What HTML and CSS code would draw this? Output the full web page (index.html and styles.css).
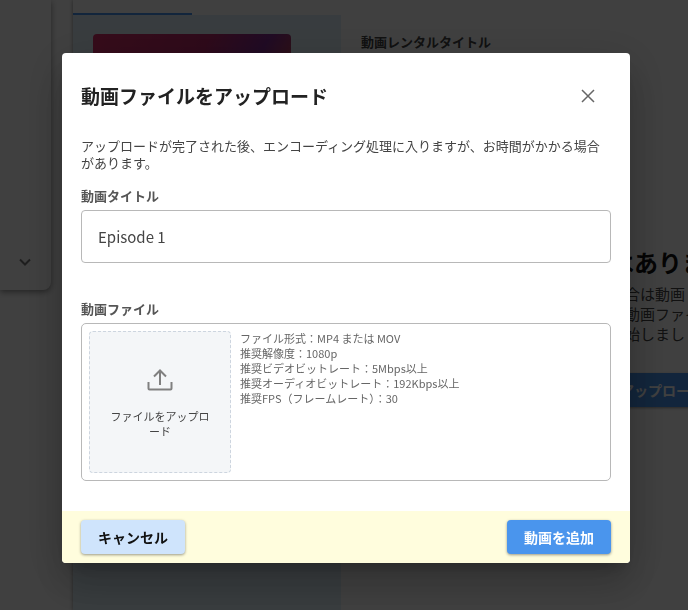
FILE: index.html
```html
<!DOCTYPE html>
<html lang="ja">
<head>
  <meta charset="UTF-8">
  <meta name="viewport" content="width=device-width, initial-scale=1.0">
  <title>動画ファイルをアップロード</title>
  <link rel="stylesheet" href="styles.css">
</head>
<body>
  <div class="page">
    <aside class="sidebar">
      <svg class="chevron" viewBox="0 0 12 8" aria-hidden="true"><path d="M1 1.5l5 5 5-5"/></svg>
    </aside>
    <main class="content">
      <div class="tabs"><div class="tab-active"></div></div>
      <div class="columns">
        <div class="preview"><div class="thumbnail"></div></div>
        <div class="details">
          <h3 class="details-label">動画レンタルタイトル</h3>
          <div class="empty">
            <h2>はありま</h2>
            <p>場合は動画<br>の動画ファイ<br>開始しまし</p>
            <button class="button empty-button" type="button">アップロード</button>
          </div>
        </div>
      </div>
    </main>
  </div>

  <div class="overlay">
    <div class="dialog" role="dialog" aria-modal="true" aria-labelledby="dialog-title">
      <header class="dialog-header">
        <h1 id="dialog-title">動画ファイルをアップロード</h1>
        <button class="close" type="button" aria-label="閉じる">
          <svg viewBox="0 0 14 14" aria-hidden="true"><path d="M1 1l12 12M13 1L1 13"/></svg>
        </button>
      </header>
      <div class="dialog-body">
        <p class="description">アップロードが完了された後、エンコーディング処理に入りますが、お時間がかかる場合があります。</p>
        <label class="field-label" for="video-title">動画タイトル</label>
        <input class="text-input" id="video-title" type="text" value="Episode 1">
        <label class="field-label" for="video-file">動画ファイル</label>
        <div class="file-box">
          <button class="dropzone" id="video-file" type="button">
            <svg viewBox="0 0 26 22" aria-hidden="true">
              <path d="M1.500 13v6.500a1 1 0 0 0 1 1h21a1 1 0 0 0 1-1V13"/>
              <path d="M13 16V1.500M7 7.500l6-6 6 6"/>
            </svg>
            <span>ファイルをアップロード</span>
          </button>
          <ul class="specs">
            <li>ファイル形式：MP4 または MOV</li>
            <li>推奨解像度：1080p</li>
            <li>推奨ビデオビットレート：5Mbps以上</li>
            <li>推奨オーディオビットレート：192Kbps以上</li>
            <li>推奨FPS（フレームレート）：30</li>
          </ul>
        </div>
      </div>
      <footer class="dialog-footer">
        <button class="button cancel" type="button">キャンセル</button>
        <button class="button submit" type="button">動画を追加</button>
      </footer>
    </div>
  </div>
</body>
</html>
```
FILE: styles.css
```css
* {
  box-sizing: border-box;
}
body {
  margin: 0;
  font-family: "Noto Sans CJK JP", sans-serif;
  color: #444;
  background: #fff;
  overflow: hidden;
}
h1, h2, h3, p, ul {
  margin: 0;
  padding: 0;
}
button, input {
  font-family: inherit;
}
svg {
  fill: none;
  stroke: currentColor;
}

/* Page behind the dialog */
.page {
  display: flex;
  align-items: flex-start;
  gap: 22px;
  height: 100vh;
  overflow: hidden;
}
.sidebar {
  flex: 0 0 51px;
  height: 290px;
  display: flex;
  align-items: flex-end;
  justify-content: flex-end;
  padding: 0 20px 24px 0;
  border-radius: 0 0 8px 0;
  box-shadow: 0 2px 6px rgba(0, 0, 0, 0.45);
}
.chevron {
  width: 12px;
  height: 8px;
  color: #777;
  stroke-width: 2;
}
.content {
  flex: 1;
  min-width: 0;
  height: 100%;
  display: flex;
  flex-direction: column;
  box-shadow: 0 0 4px rgba(0, 0, 0, 0.45);
}
.tabs {
  height: 15px;
  display: flex;
  align-items: flex-end;
}
.tab-active {
  width: 119px;
  height: 2px;
  background: #4a95ed;
}
.columns {
  flex: 1;
  display: flex;
}
.preview {
  flex: 0 0 268px;
  padding: 19px 50px 0 20px;
  background: #e0f0fa;
}
.thumbnail {
  height: 112px;
  border-radius: 4px;
  background: linear-gradient(120deg, #d83068, #b82868 45%, #802c90 68%, #b03c60 80%);
}
.details {
  flex: 1;
  min-width: 0;
  padding: 17px 0 0 20px;
}
.details-label {
  font-size: 13px;
  line-height: 20px;
}
.empty {
  padding: 194px 0 0 249px;
  white-space: nowrap;
}
.empty h2 {
  font-size: 24px;
  line-height: 32px;
  color: #111;
}
.empty p {
  padding-top: 6px;
  font-size: 15px;
  line-height: 20px;
}
.empty .empty-button {
  margin-top: 29px;
  padding: 0 10px;
  color: #fff;
  background: #4a95ed;
}

/* Dialog */
.overlay {
  position: fixed;
  inset: 0;
  padding: 53px 58px 47px 62px;
  background: rgba(0, 0, 0, 0.75);
}
.dialog {
  overflow: hidden;
  border-radius: 4px;
  background: #fff;
  box-shadow: 0 11px 15px -7px rgba(0, 0, 0, 0.2),
    0 24px 38px 3px rgba(0, 0, 0, 0.14),
    0 9px 46px 8px rgba(0, 0, 0, 0.12);
}
.dialog-header {
  display: flex;
  align-items: center;
  justify-content: space-between;
  padding: 27px 31px 25px 19px;
}
.dialog-header h1 {
  font-size: 19px;
  line-height: 32px;
  color: #222;
}
.close {
  display: flex;
  padding: 4px;
  border: 0;
  color: #666;
  background: none;
  cursor: pointer;
}
.close svg {
  width: 14px;
  height: 14px;
  stroke-width: 1.5;
}
.dialog-body {
  padding: 0 19px 30px;
}
.description {
  padding-bottom: 15px;
  font-size: 13px;
  line-height: 17px;
}
.field-label {
  display: block;
  margin-bottom: 4px;
  font-size: 13px;
  font-weight: bold;
  line-height: 20px;
  color: #555;
}
.text-input {
  display: block;
  width: 100%;
  height: 53px;
  margin-bottom: 36px;
  padding: 0 16px;
  border: 1px solid #b8b8b8;
  border-radius: 4px;
  font-size: 15px;
  color: #444;
  background: #fff;
}
.file-box {
  display: flex;
  align-items: flex-start;
  gap: 9px;
  padding: 7px;
  border: 1px solid #b8b8b8;
  border-radius: 5px;
}
.dropzone {
  flex: 0 0 142px;
  height: 142px;
  display: flex;
  flex-direction: column;
  align-items: center;
  justify-content: center;
  gap: 18px;
  padding: 3px 20px 0;
  border: 1px dashed #cdd5df;
  border-radius: 4px;
  font-size: 11px;
  line-height: 15px;
  color: #444;
  background: #f4f6f8;
  cursor: pointer;
}
.dropzone svg {
  width: 26px;
  height: 22px;
  color: #808080;
  stroke-width: 2;
}
.specs {
  list-style: none;
  font-size: 11px;
  line-height: 15px;
  color: #666;
}
.dialog-footer {
  display: flex;
  justify-content: space-between;
  padding: 9px 19px;
  background: #fffddd;
}
.button {
  min-width: 104px;
  height: 34px;
  padding: 0 16px;
  border: 0;
  border-radius: 4px;
  font-size: 14px;
  font-weight: bold;
  box-shadow: 0 1px 3px rgba(0, 0, 0, 0.4);
  cursor: pointer;
}
.cancel {
  color: #111;
  background: #cfe4fc;
}
.submit {
  color: #fff;
  background: #4a95ed;
}
```
